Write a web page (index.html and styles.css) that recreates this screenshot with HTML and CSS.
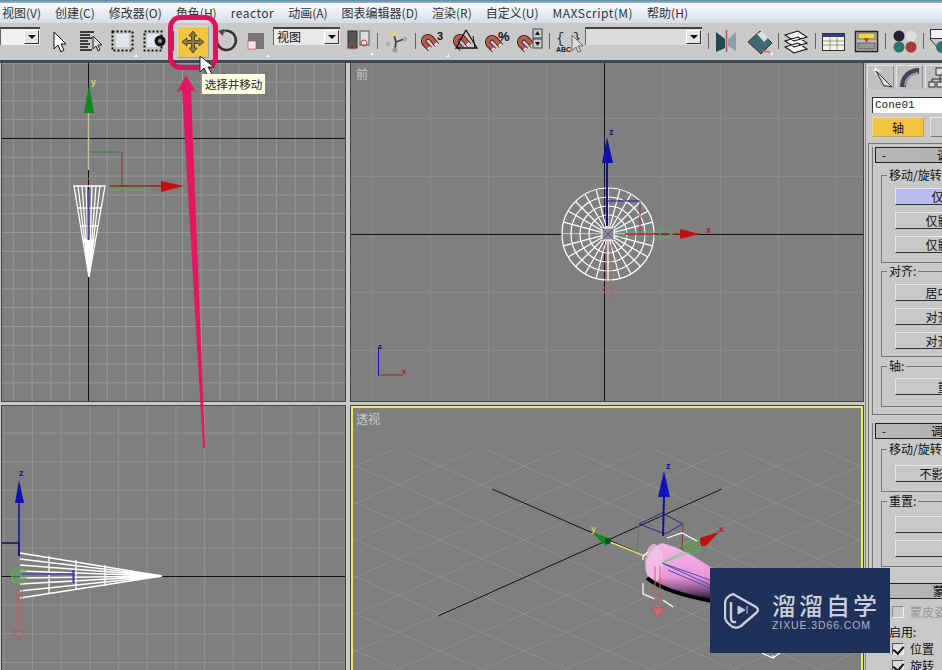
FILE: index.html
```html
<!DOCTYPE html>
<html lang="zh">
<head>
<meta charset="utf-8">
<title>3ds Max</title>
<link rel="stylesheet" href="styles.css">
</head>
<body>
<div class="app">
  <svg class="defs" width="0" height="0">
    <defs>
      <g id="mag">
        <path d="M2 7L-3 2A4.200 4.200 0 0 1 3 -4L9 3" fill="none" stroke="#2a2020" stroke-width="5.600"/>
        <path d="M2 7L-3 2A4.200 4.200 0 0 1 3 -4L9 3" fill="none" stroke="#bd5a4e" stroke-width="3.800"/>
        <path d="M2 7L.5 5.500M9 3L7.500 1.500" fill="none" stroke="#eee" stroke-width="3.800"/>
      </g>
      <line id="spoke" x1="562" y1="234" x2="654" y2="234" stroke="#fff" stroke-width="1.200"/>
      <pattern id="pgrid" width="42" height="42" patternUnits="userSpaceOnUse" patternTransform="matrix(1 .44 1 -.44 607 540)">
        <path d="M0 0H42M0 0V42" fill="none" stroke="#979797" stroke-width="1.200"/>
      </pattern>
      <linearGradient id="pink" x1="0" y1="0" x2="0" y2="1">
        <stop offset="0" stop-color="#f5b8ea"/><stop offset=".6" stop-color="#e896d8"/><stop offset=".85" stop-color="#7a4a78"/><stop offset="1" stop-color="#1a1020"/>
      </linearGradient>
    </defs>
  </svg>

  <div class="topbar"></div>
  <nav class="menu">
    <span class="menu-item">视图(V)</span>
    <span class="menu-item">创建(C)</span>
    <span class="menu-item">修改器(O)</span>
    <span class="menu-item">角色(H)</span>
    <span class="menu-item menu-latin">reactor</span>
    <span class="menu-item">动画(A)</span>
    <span class="menu-item">图表编辑器(D)</span>
    <span class="menu-item">渲染(R)</span>
    <span class="menu-item">自定义(U)</span>
    <span class="menu-item menu-latin">MAXScript(M)</span>
    <span class="menu-item">帮助(H)</span>
  </nav>

  <div class="toolbar">
    <div class="combo combo-a"><span class="combo-arrow"></span></div>
    <svg width="32" height="36" viewBox="40 24 32 36"><path d="M54 33V50L58 46 61 53 64 51 61 45 66 45Z" fill="#fff" stroke="#111"/></svg>
    <svg width="34" height="36" viewBox="72 24 34 36"><path d="M80 33H94M80 36H90M80 39H92M80 42H88M80 45H90M80 48H88M80 51H92" stroke="#111" stroke-width="1.400"/><path d="M93 37V50L96 47 98 52 100 51 98 46 102 46Z" fill="#ddd" stroke="#222"/></svg>
    <svg width="32" height="36" viewBox="106 24 32 36"><rect x="116" y="35" width="13" height="13" fill="#e2e6f2"/><rect x="112.500" y="32.500" width="20" height="19" fill="none" stroke="#111" stroke-width="2" stroke-dasharray="2 2"/><path d="M137 55V58H134Z" fill="#fff"/></svg>
    <svg width="34" height="36" viewBox="138 24 34 36"><rect x="147" y="35" width="12" height="13" fill="#e2e6f2"/><rect x="144.500" y="32.500" width="17" height="19" fill="none" stroke="#111" stroke-width="2" stroke-dasharray="2 2"/><circle cx="160" cy="42" r="5.500" fill="#111"/><circle cx="160" cy="42" r="2" fill="#999"/></svg>
    <svg width="5" height="36" viewBox="172 24 5 36"><path d="M173.500 32V52" stroke="#555"/></svg>
    <div class="tool-active"><svg width="28" height="28" viewBox="179 29 28 28"><path d="M193 32L197 37H194.500V41.500H199V39L204 43 199 47V44.500H194.500V49H197L193 54 189 49H191.500V44.500H187V47L182 43 187 39V41.500H191.500V37H189Z" fill="#8a7a4a" stroke="#544a30"/></svg></div>
    <svg width="31" height="36" viewBox="209 24 31 36"><path d="M222 33A9.500 9.500 0 1 1 217 40" fill="none" stroke="#333" stroke-width="2.500"/><path d="M222 33A9.500 9.500 0 0 1 233 44" fill="none" stroke="#ddd" stroke-width="1"/><path d="M218 32L224 30 223 37Z" fill="#444"/></svg>
    <svg width="30" height="36" viewBox="240 24 30 36"><rect x="248" y="34" width="16" height="16" fill="#777"/><rect x="248" y="42" width="8" height="8" fill="#f8e4e4" stroke="#c04040" stroke-width=".6"/><path d="M269 55V58H266Z" fill="#fff"/></svg>
    <div class="combo combo-b"><span class="combo-text">视图</span><span class="combo-arrow"></span></div>
    <svg width="34" height="36" viewBox="340 24 34 36"><rect x="348" y="32" width="9" height="17" fill="#555" stroke="#333"/><rect x="360" y="32" width="9" height="14" fill="#ddd" stroke="#555"/><circle cx="352" cy="47" r="3" fill="none" stroke="#c04050"/><circle cx="364" cy="44" r="3" fill="none" stroke="#c04050"/><path d="M373 53V56H370Z" fill="#fff"/></svg>
    <svg width="6" height="36" viewBox="374 24 6 36"><path d="M377.500 34V50" stroke="#666"/></svg>
    <svg width="32" height="36" viewBox="380 24 32 36"><path d="M394 36L396 43M396 43L404 40M396 43L395 50" stroke="#444" stroke-width="1.800"/><circle cx="394" cy="35" r="2.500" fill="#e0d080"/><circle cx="405" cy="40" r="2.200" fill="#aaa"/><circle cx="395" cy="51" r="2.500" fill="#999"/><circle cx="388" cy="45" r="2" fill="#aaa"/></svg>
    <svg width="6" height="36" viewBox="412 24 6 36"><path d="M415.500 34V50" stroke="#666"/></svg>
    <svg width="32" height="36" viewBox="418 24 32 36"><use href="#mag" x="428" y="43"/><text x="437" y="41" class="snap-text">3</text><path d="M449 55V58H446Z" fill="#fff"/></svg>
    <svg width="32" height="36" viewBox="450 24 32 36"><use href="#mag" x="460" y="43"/><path d="M466 31L456 49H477L466 31" fill="none" stroke="#111" stroke-width="1.300"/><path d="M473 37L475 49" stroke="#111"/></svg>
    <svg width="32" height="36" viewBox="482 24 32 36"><use href="#mag" x="492" y="44"/><text x="498" y="42" class="snap-text snap-pct">%</text></svg>
    <svg width="32" height="36" viewBox="514 24 32 36"><use href="#mag" x="524" y="44"/><rect x="533" y="30" width="9" height="9" fill="#ccc" stroke="#444"/><rect x="533" y="40" width="9" height="9" fill="#ccc" stroke="#444"/><path d="M537.500 32L540 36H535ZM537.500 47L540 43H535Z" fill="#111"/></svg>
    <svg width="6" height="36" viewBox="546 24 6 36"><path d="M549.500 34V50" stroke="#666"/></svg>
    <svg width="33" height="36" viewBox="552 24 33 36"><text x="556" y="44" class="brace-text">{ }</text><text x="556" y="53" class="abc-text">ABC</text><path d="M572 36V52L576 48 578 53 581 52 578 47 583 47Z" fill="#ddd" stroke="#666"/></svg>
    <div class="combo combo-c"><span class="combo-arrow"></span></div>
    <svg width="10" height="36" viewBox="702 24 10 36"><path d="M708.500 34V50" stroke="#666"/></svg>
    <svg width="30" height="36" viewBox="712 24 30 36"><path d="M716 33L725 40V49L716 53Z" fill="#1d4a55"/><path d="M736 33L728 40V47L736 52Z" fill="#8da0aa"/><path d="M726.500 31V53" stroke="#c05050" stroke-width="1.500"/></svg>
    <svg width="34" height="36" viewBox="742 24 34 36"><path d="M748 43L760 32 772 44 761 55Z" fill="#406a70" stroke="#333"/><path d="M757 35L762 32 768 39 764 43Z" fill="#ddd"/><path d="M762 52L770 53" stroke="#d06060" stroke-width="1.500"/><path d="M773 53V56H770Z" fill="#fff"/></svg>
    <svg width="5" height="36" viewBox="776 24 5 36"><path d="M778.500 34V50" stroke="#666"/></svg>
    <svg width="30" height="36" viewBox="781 24 30 36"><path d="M785 36L798 32 807 38 794 42ZM785 42L798 38 807 44 794 48ZM785 48L798 44 807 50 794 54Z" fill="#f4f4f4" stroke="#111" stroke-width="1.100"/></svg>
    <svg width="8" height="36" viewBox="811 24 8 36"><path d="M815.500 34V50" stroke="#666"/></svg>
    <svg width="31" height="36" viewBox="819 24 31 36"><rect x="822.500" y="34.500" width="22" height="17" fill="#f4f4e8" stroke="#333"/><rect x="823" y="35" width="21" height="3" fill="#303c90"/><path d="M830 38V51M823 42H844M823 46H844M837 38V51" stroke="#789060" stroke-width=".8"/></svg>
    <svg width="32" height="36" viewBox="850 24 32 36"><rect x="855.500" y="32.500" width="22" height="20" fill="#bbb" stroke="#222" stroke-width="1.500"/><rect x="858" y="34" width="17" height="6" fill="#ecd44c" stroke="#333" stroke-width=".6"/><rect x="858" y="44" width="17" height="6" fill="#999" stroke="#333" stroke-width=".6"/><path d="M864 39H869L866.500 44Z" fill="#b04020"/></svg>
    <svg width="8" height="36" viewBox="882 24 8 36"><path d="M885.500 34V50" stroke="#666"/></svg>
    <svg width="30" height="36" viewBox="890 24 30 36"><circle cx="899" cy="37" r="5.500" fill="#223"/><circle cx="911" cy="37" r="5.500" fill="#ddd"/><circle cx="899" cy="48" r="5.500" fill="#2a7570"/><circle cx="911" cy="48" r="5.500" fill="#a83838"/></svg>
    <svg width="6" height="36" viewBox="920 24 6 36"><path d="M923.500 34V50" stroke="#666"/></svg>
    <svg width="16" height="36" viewBox="926 24 16 36"><rect x="930.500" y="30.500" width="20" height="9" fill="#f2f2f8" stroke="#334"/><path d="M930 40L938 49" stroke="#333"/><circle cx="942" cy="48" r="6" fill="#2a7570"/></svg>
  </div>

  <main class="workspace">
    <div class="viewports">
      <section class="vp vp-top">
        <svg class="vp-svg" viewBox="2 63 343 338">
          <path d="M88.500 63V401M2 138.500H345" stroke="#111"/>
          <path d="M89 152H122" stroke="#3f7a3f"/>
          <path d="M122 152V186" stroke="#8a3a3a"/>
          <path d="M88.500 170V110" stroke="#c8c090" stroke-width="1.500"/>
          <path d="M84 113H94L89 85Z" fill="#0c8a20"/>
          <text x="91" y="85" class="axis axis-y">y</text>
          <path d="M104 187H146M104 190H146" stroke="#5aa85a"/>
          <path d="M144 183L150 188 144 193" fill="none" stroke="#5aa85a"/>
          <path d="M110 186H164" stroke="#a02020" stroke-width="1.500"/>
          <path d="M161 181V192L184 186Z" fill="#c01010"/>
          <path d="M74 186H105L89 277Z" fill="none" stroke="#fff" stroke-width="1.300"/>
          <path d="M78 186L89 277M82 186L89 277M86 186L89 277M92 186L89 277M96 186L89 277M100 186L89 277M77 208H101M80 226H98M83 240H95" stroke="#fff" stroke-width="1.300"/>
          <path d="M84 240H94L89 277Z" fill="#fff"/>
          <path d="M88.500 190V240" stroke="#4a4a90" stroke-width="2"/>
          <path d="M84 184L89 178 95 184" fill="none" stroke="#c86060"/>
        </svg>
      </section>
      <section class="vp vp-front">
        <svg class="vp-svg" viewBox="351 63 512 338">
          <path d="M604.500 63V401M351 234.500H863" stroke="#111"/>
          <text x="356" y="79" class="vp-label">前</text>
          <circle cx="608" cy="234" r="46" fill="none" stroke="#fff" stroke-width="1.200"/>
          <circle cx="608" cy="234" r="37" fill="none" stroke="#fff" stroke-width="1.200"/>
          <circle cx="608" cy="234" r="28" fill="none" stroke="#fff" stroke-width="1.200"/>
          <circle cx="608" cy="234" r="19" fill="none" stroke="#fff" stroke-width="1.200"/>
          <use href="#spoke"/>
          <use href="#spoke" transform="rotate(15 608 234)"/>
          <use href="#spoke" transform="rotate(30 608 234)"/>
          <use href="#spoke" transform="rotate(45 608 234)"/>
          <use href="#spoke" transform="rotate(60 608 234)"/>
          <use href="#spoke" transform="rotate(75 608 234)"/>
          <use href="#spoke" transform="rotate(90 608 234)"/>
          <use href="#spoke" transform="rotate(105 608 234)"/>
          <use href="#spoke" transform="rotate(120 608 234)"/>
          <use href="#spoke" transform="rotate(135 608 234)"/>
          <use href="#spoke" transform="rotate(150 608 234)"/>
          <use href="#spoke" transform="rotate(165 608 234)"/>
          <path d="M607 163V226" stroke="#10109a" stroke-width="2"/>
          <path d="M602 163H613L607 137Z" fill="#1010b0"/>
          <text x="609" y="135" class="axis axis-blue">z</text>
          <path d="M607 201H640" stroke="#1c1c90"/>
          <path d="M640 201V234" stroke="#a03030"/>
          <path d="M625 234H682" stroke="#b02020" stroke-width="1.500"/>
          <path d="M680 229V239L700 234Z" fill="#c01010"/>
          <text x="706" y="233" class="axis axis-red">x</text>
          <path d="M618 232H660M618 237H660" stroke="#5aa878"/>
          <path d="M660 228L672 234 660 241Z" fill="none" stroke="#5aa878" stroke-width="1.300"/>
          <rect x="602" y="228" width="12" height="12" fill="#888" stroke="#fff"/>
          <path d="M602 228L614 240M614 228L602 240" stroke="#5050a0"/>
          <path d="M606 244V286M611 244V286" stroke="#c06868"/>
          <path d="M602 288H615L608 298Z" fill="none" stroke="#c05858"/>
          <path d="M378.500 376V347" stroke="#1a1a90"/>
          <path d="M380 375H403" stroke="#a02020"/>
          <text x="378" y="349" class="axis axis-blue small">z</text>
          <text x="402" y="374" class="axis axis-red small">x</text>
        </svg>
      </section>
      <section class="vp vp-left">
        <svg class="vp-svg" viewBox="2 406 343 264">
          <path d="M2 576.500H345" stroke="#111"/>
          <path d="M2 543H19V556" fill="none" stroke="#10108a" stroke-width="1.300"/>
          <path d="M19 500V556" stroke="#10109a" stroke-width="1.500"/>
          <path d="M15 503H24L19 480Z" fill="#1010b0"/>
          <text x="19" y="476" class="axis axis-blue">z</text>
          <rect x="20" y="553" width="2" height="45" fill="#fff"/>
          <path d="M20 553L162 576 20 598" fill="#7f7f7f" stroke="#fff" stroke-width="1.600"/>
          <path d="M20 559L162 576M20 565L162 576M20 571L162 576M20 578L162 576M20 584L162 576M20 591L162 576M49 556V594M76 560V590M105 565V586" stroke="#fff" stroke-width="1.300"/>
          <path d="M130 571L162 576 130 581Z" fill="#fff"/>
          <rect x="12" y="569" width="14" height="14" rx="3" fill="#6a9a6a" fill-opacity=".6" stroke="#5ab85a"/>
          <path d="M22 574H74" stroke="#5a5a9a" stroke-width="2"/>
          <path d="M73.500 570V583" stroke="#3a3a9a" stroke-width="2"/>
          <path d="M17 590V630M22 590V630" stroke="#c06060"/>
          <path d="M12 631H26L19 640Z" fill="none" stroke="#c05050"/>
        </svg>
      </section>
      <section class="vp vp-persp">
        <svg class="vp-svg" viewBox="353 408 508 262">
          <rect x="353" y="450" width="508" height="220" fill="url(#pgrid)"/>
          <text x="356" y="424" class="vp-label">透视</text>
          <path d="M492 489L650 558M438 616L722 489" stroke="#111"/>
          <path d="M639 524L665 534 683 524M639 524L662 513 683 524" fill="none" stroke="#2a2a90"/>
          <path d="M639 524L637 552" stroke="#4a8a4a"/>
          <path d="M683 524L682 552" stroke="#a03030"/>
          <path d="M663 536L664 497" stroke="#1010a0" stroke-width="2"/>
          <path d="M658 497H670L664 471Z" fill="#1010c0"/>
          <text x="666" y="469" class="axis axis-blue">z</text>
          <path d="M610 542L645 556" stroke="#e0d870" stroke-width="1.500"/>
          <path d="M591 532L606 537 610 542 606 546Z" fill="#0a8a20"/>
          <circle cx="608" cy="541" r="3" fill="#104a20"/>
          <text x="591" y="532" class="axis axis-y">y</text>
          <path d="M683 545L697 538 701 550 688 556Z" fill="#5c9a5c" fill-opacity=".7" stroke="#5ab05a"/>
          <path d="M660 564L702 542" stroke="#a03030" stroke-width="1.500"/>
          <path d="M700 538L719 532 706 546 701 546Z" fill="#c01010"/>
          <text x="719" y="532" class="axis axis-red">x</text>
          <path d="M662 543C680 547 700 560 715 570L712 600C690 596 665 590 653 583 644 575 642 552 662 543Z" fill="url(#pink)"/>
          <ellipse cx="654" cy="563" rx="9" ry="19" fill="#f4c4ec" fill-opacity=".7"/>
          <path d="M647 578C662 590 690 597 712 601" fill="none" stroke="#000" stroke-width="4"/>
          <path d="M662 563L710 580M662 563L710 585M668 570L710 588" stroke="#4a4ab0"/>
          <path d="M662 563L700 543M662 563L690 552" stroke="#78c878"/>
          <path d="M648 552L643 556V560M667 538L682 533 697 541M643 583V594L655 599M663 600L673 607" fill="none" stroke="#fff" stroke-width="1.200"/>
          <path d="M655 566V608M660 566V608" stroke="#d06060"/>
          <path d="M651 608H665L658 617Z" fill="#c07070" stroke="#c05050"/>
          <path d="M762 653L773 658 781 652M773 658V655" fill="none" stroke="#fff" stroke-width="1.200"/>
        </svg>
      </section>
    </div>

    <aside class="panel">
      <div class="panel-inner">
        <div class="tabs">
          <div class="tab"><svg width="24" height="22" viewBox="0 0 24 22"><path d="M5 1L9 5M3 3L11 3M6 0L6 8" stroke="#fff"/><path d="M6 4L22 20 17 19 14 19Z" fill="#ddd" stroke="#333"/></svg></div>
          <div class="tab"><svg width="24" height="22" viewBox="0 0 24 22"><path d="M4 20C4 11 10 4 20 4" fill="none" stroke="#445" stroke-width="6"/><path d="M6 19C6 12 11 7 19 6" fill="none" stroke="#9ab" stroke-width="1.500"/></svg></div>
          <div class="tab"><svg width="24" height="22" viewBox="0 0 24 22"><rect x="8" y="1" width="9" height="7" fill="#ddd" stroke="#333"/><path d="M12 8V12M4 12H20M4 12V15M20 12V15M12 12V15" stroke="#333"/><rect x="1" y="15" width="6" height="5" fill="#ddd" stroke="#333"/><rect x="9" y="15" width="6" height="5" fill="#ddd" stroke="#333"/></svg></div>
        </div>
        <div class="name-field">Cone01</div>
        <div class="mode-row">
          <div class="mode mode-on">轴</div>
          <div class="mode">IK</div>
        </div>
        <div class="tab-body">
          <div class="rollout rollout-first">
            <div class="roll-head"><span class="roll-minus">-</span><span class="roll-title">调整轴</span></div>
            <div class="group g-move">
              <span class="legend">移动/旋转/缩放:</span>
              <div class="btn btn-on">仅影响轴</div>
              <div class="btn">仅影响对象</div>
              <div class="btn">仅影响层次</div>
            </div>
            <div class="group g-align">
              <span class="legend">对齐:</span>
              <div class="btn">居中到对象</div>
              <div class="btn">对齐到对象</div>
              <div class="btn">对齐到世界</div>
            </div>
            <div class="group g-axis">
              <span class="legend">轴:</span>
              <div class="btn">重置轴</div>
            </div>
          </div>
          <div class="rollout rollout-second">
            <div class="roll-head"><span class="roll-minus">-</span><span class="roll-title">调整变换</span></div>
            <div class="group g-move2">
              <span class="legend">移动/旋转/缩放:</span>
              <div class="btn">不影响子对象</div>
            </div>
            <div class="group g-reset">
              <span class="legend">重置:</span>
              <div class="btn"></div>
              <div class="btn"></div>
            </div>
          </div>
          <div class="rollout rollout-third">
            <div class="roll-head"><span class="roll-minus"></span><span class="roll-title">蒙皮姿势</span></div>
            <label class="check check-off"><span class="box"></span>蒙皮姿势模式</label>
            <div class="enable-label">启用:</div>
            <label class="check"><span class="box box-on"></span>位置</label>
            <label class="check"><span class="box box-on"></span>旋转</label>
          </div>
        </div>
      </div>
    </aside>
  </main>

  <svg class="annotation" viewBox="0 0 942 670">
    <rect x="170.500" y="17.500" width="45" height="50" rx="10" fill="none" stroke="#d9155f" stroke-width="5"/>
    <path d="M186 75L196 92 191 90 205 448 203 448 182 90 177 92Z" fill="#e3175f"/>
    <path d="M200 56V72L204 68 208 76 212 74 208 67 214 67Z" fill="#fff" stroke="#222"/>
  </svg>
  <div class="tooltip">选择并移动</div>
  <div class="logo">
    <svg width="36" height="38" viewBox="724 592 36 38"><path d="M733 594L756 607Q760 610 756 613L741 626Q735 630 730 625 725 621 725 617V604Q725 597 733 594ZM731 602V618Q731 623 736 622" fill="none" stroke="#c9ced8" stroke-width="2.400" stroke-linejoin="round"/><path d="M738 606L745 610 738 614ZM747 606V614" fill="#c9ced8" stroke="#c9ced8"/></svg>
    <div class="logo-text">
      <div class="logo-cn">溜溜自学</div>
      <div class="logo-en">ZIXUE.3D66.COM</div>
    </div>
  </div>
</div>
</body>
</html>
```
FILE: styles.css
```css
* { box-sizing: border-box; }
html, body { margin: 0; padding: 0; }
body { width: 942px; height: 670px; overflow: hidden; background: #c8c8c8; font-family: "Noto Sans CJK SC", "Liberation Sans", sans-serif; color: #111; }
.app { position: relative; width: 942px; height: 670px; overflow: hidden; background: #c8c8c8; }
.defs { position: absolute; }

.topbar { height: 3px; background: linear-gradient(#5e87a5, #9db7ca); }
.menu { height: 20px; display: flex; align-items: center; padding-left: 2px; background: linear-gradient(#fbfcfe, #d6dcea); font-size: 12px; line-height: 20px; color: #333; white-space: nowrap; }
.menu-item { margin-right: 14px; }
.menu-latin { letter-spacing: .5px; }

.toolbar { height: 37px; display: flex; align-items: flex-start; background: #c9c9c9; padding-top: 0; }
.toolbar > svg { display: block; flex: none; }
.snap-text { font: bold 11px "Liberation Sans", sans-serif; fill: #111; }
.snap-pct { font-size: 13px; }
.brace-text { font: 14px "Liberation Mono", monospace; fill: #333; }
.abc-text { font: bold 7px "Liberation Sans", sans-serif; fill: #222; }

.combo { flex: none; height: 18px; margin-top: 4px; display: flex; align-items: center; background: #e9e9e9; border-top: 2px solid #444; border-left: 1px solid #666; font-size: 12px; }
.combo-a { width: 40px; background: #f0f0f0; }
.combo-b { width: 67px; margin-left: 3px; }
.combo-c { width: 117px; background: #dcdcdc; }
.combo-text { padding-left: 3px; line-height: 14px; }
.combo-arrow { width: 15px; height: 14px; margin: 0 1px 0 auto; background: #e6e6e6; border: 1px solid; border-color: #fff #333 #333 #fff; position: relative; }
.combo-arrow::after { content: ""; position: absolute; left: 3px; top: 4px; border: 4px solid transparent; border-top: 4px solid #111; border-bottom: 0; }
.tool-active { flex: none; width: 32px; height: 32px; margin-top: 3px; padding: 1px; background: #f3c440; border: 1px solid; border-color: #dcdcdc #a0a0a0 #a0a0a0 #dcdcdc; }
.tool-active svg { display: block; }

.workspace { height: 610px; display: flex; padding: 3px 0 0 2px; background: #c8c8c8; box-shadow: inset 0 3px 0 #424a50; }
.viewports { flex: none; width: 861px; display: grid; grid-template-columns: 343px 512px; grid-template-rows: 338px 264px; column-gap: 6px; row-gap: 5px; }
.vp { position: relative; background-color: #7f7f7f; box-shadow: 0 0 0 1px #40464a; overflow: hidden; }
.vp-svg { display: block; width: 100%; height: 100%; }
.vp-top { background-image: linear-gradient(to right, #999 1px, transparent 1px), linear-gradient(#999 1px, transparent 1px); background-size: 18.8px 18.8px; background-position: 10.8px 18.6px; }
.vp-front { background-image: linear-gradient(to right, #8b8b8b 1px, transparent 1px), linear-gradient(#8b8b8b 1px, transparent 1px); background-size: 58px 58px; background-position: 21px 55px; }
.vp-left { background-image: linear-gradient(to right, #929292 1px, transparent 1px), linear-gradient(#929292 1px, transparent 1px); background-size: 28.7px 28.7px; background-position: 1.3px 26.5px; }
.vp-persp { border: 2px solid #ecea58; border-bottom: 0; }
.vp-label { font-size: 12px; fill: #c8c8c8; }
.axis { font: bold 9px "Liberation Sans", sans-serif; }
.axis.small { font-size: 8px; }
.axis-y { fill: #d8d060; }
.axis-blue { fill: #1414a0; }
.axis-red { fill: #b02020; }

.panel { flex: none; width: 77px; margin-left: 2px; height: 607px; overflow: hidden; box-shadow: inset 1px 0 0 #888; }
.panel-inner { width: 180px; font-size: 12px; line-height: 16px; }
.tabs { display: flex; gap: 2px; margin: 2px 0 0 2px; height: 24px; }
.tab { width: 27px; height: 24px; padding: 1px 2px; background: #c0c0c0; border: 1px solid; border-color: #e2e2e2 #8e8e8e #c0c0c0 #e2e2e2; }
.tab svg { display: block; }
.name-field { margin: 8px 0 0 7px; width: 110px; height: 16px; padding-left: 2px; background: #fff; border-top: 1px solid #333; border-left: 1px solid #333; font: 11px/15px "Liberation Mono", monospace; color: #222; }
.mode-row { display: flex; gap: 6px; margin: 4px 0 0 7px; }
.mode { width: 52px; height: 20px; text-align: center; line-height: 20px; background: #c8c8c8; border: 1px solid; border-color: #e6e6e6 #777 #777 #e6e6e6; }
.mode-on { background: #f3c440; border-color: #e6d8a0 #c8a840 #c8a840 #e6d8a0; }
.tab-body { margin: 6px 0 0 3px; border-top: 1px solid #777; border-left: 1px solid #777; padding-top: 3px; height: 480px; }
.rollout { margin-left: 3px; width: 170px; border-left: 1px solid #777; }
.rollout-first { height: 268px; border-bottom: 1px solid #777; }
.rollout-second { margin-top: 8px; height: 160px; }
.rollout-third { border-left: 0; }
.roll-head { position: relative; margin-left: 2px; height: 16px; display: flex; justify-content: center; background: linear-gradient(to right, #b8b8b8, #a8a8a8); border: 1px solid #222; line-height: 14px; width: 160px; }
.roll-minus { position: absolute; left: 6px; top: 0; }
.group { position: relative; margin: 0 0 0 8px; width: 162px; padding-left: 13px; border: 1px solid #777; border-right: 0; }
.legend { position: absolute; left: 5px; top: -9px; padding: 0 2px; background: #c8c8c8; white-space: nowrap; line-height: 16px; }
.btn { width: 120px; height: 17px; margin-top: 7px; text-align: center; line-height: 15px; background: #c8c8c8; border: 1px solid; border-color: #e8e8e8 #333 #333 #e8e8e8; border-right: 0; }
.btn:first-of-type { margin-top: 0; }
.btn-on { background: #b8bcf0; }
.g-move { margin-top: 12px; height: 88px; padding-top: 12px; }
.g-align { margin-top: 8px; height: 86px; padding-top: 12px; }
.g-axis { margin-top: 9px; height: 41px; padding-top: 11px; }
.g-move2 { margin-top: 10px; height: 43px; padding-top: 15px; }
.g-reset { margin-top: 9px; height: 66px; padding-top: 14px; }
.rollout-third .roll-head { margin-left: 5px; }
.check { display: flex; align-items: center; gap: 6px; margin-left: 20px; height: 17px; white-space: nowrap; }
.check-off { color: #989898; margin-top: 4px; }
.box { flex: none; width: 12px; height: 12px; background: #ddd; border: 1px solid; border-color: #555 #eee #eee #555; position: relative; }
.check-off .box { background: #c8c8c8; border-color: #888 #eee #eee #888; }
.box-on::after { content: ""; position: absolute; left: 2px; top: 0; width: 5px; height: 8px; border: solid #111; border-width: 0 2px 2px 0; transform: rotate(40deg); }
.enable-label { margin: 4px 0 0 17px; height: 16px; }

.annotation { position: absolute; left: 0; top: 0; width: 942px; height: 670px; pointer-events: none; }
.tooltip { position: absolute; left: 202px; top: 74px; width: 63px; height: 20px; background: #ffffe1; font-size: 11.500px; line-height: 20px; text-align: center; white-space: nowrap; color: #222; box-shadow: 0 0 1px #888; }
.logo { position: absolute; left: 710px; top: 568px; width: 180px; height: 85px; background: #1f3059; display: flex; align-items: center; gap: 12px; padding: 0 0 0 14px; }
.logo svg { display: block; flex: none; }
.logo-text { display: flex; flex-direction: column; }
.logo-cn { font-size: 24px; line-height: 28px; font-weight: 500; letter-spacing: 3px; color: #c9ced8; white-space: nowrap; }
.logo-en { font: 10.500px/12px "Liberation Sans", sans-serif; letter-spacing: .9px; color: #aeb4c4; white-space: nowrap; }
```
